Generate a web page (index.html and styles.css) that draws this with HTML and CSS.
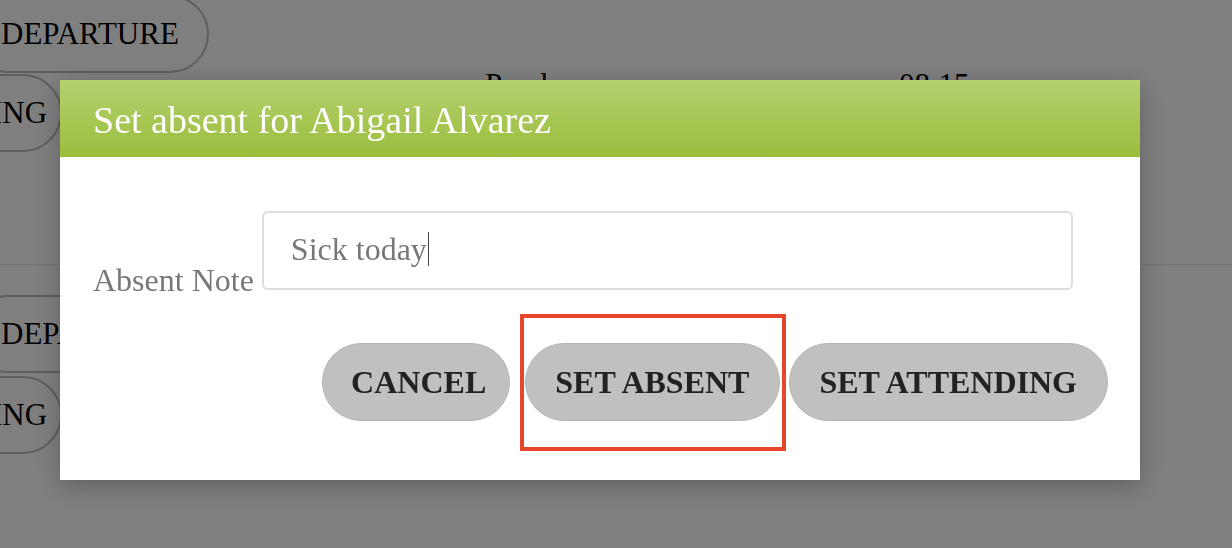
FILE: index.html
```html
<!DOCTYPE html>
<html lang="en">
<head>
<meta charset="utf-8">
<title>Set absent</title>
<link rel="stylesheet" href="styles.css">
</head>
<body>
<main class="page">
  <section class="row row-first">
    <div class="actions">
      <button class="pill pill-wide">DEPARTURE</button>
      <button class="pill pill-narrow">SETTING</button>
    </div>
    <div class="name">Pearl</div>
    <div class="time">08:15</div>
  </section>
  <section class="row">
    <div class="actions">
      <button class="pill pill-wide">DEPARTURE</button>
      <button class="pill pill-narrow pill-gap">SETTING</button>
    </div>
    <div class="name">Paul</div>
    <div class="time">08:30</div>
  </section>
</main>

<div class="overlay">
  <div class="modal" role="dialog" aria-labelledby="modal-title">
    <header class="modal-header">
      <h2 id="modal-title" class="modal-title">Set absent for Abigail Alvarez</h2>
    </header>
    <div class="modal-body">
      <div class="field">
        <label class="field-label">Absent Note</label>
        <div class="field-input">Sick today<span class="caret"></span></div>
      </div>
      <div class="buttons">
        <button class="btn btn-cancel">CANCEL</button>
        <button class="btn">SET ABSENT</button>
        <button class="btn">SET ATTENDING</button>
      </div>
    </div>
    <div class="highlight"></div>
  </div>
</div>
</body>
</html>
```

FILE: styles.css
```css
html, body {
  margin: 0;
  padding: 0;
  background: #ffffff;
  overflow: hidden;
}

body {
  font-family: "Liberation Serif", "Times New Roman", serif;
  width: 1232px;
  height: 548px;
}

.page {
  margin-top: -35px;
}

.row {
  display: flex;
  align-items: flex-start;
  padding-top: 30px;
  border-bottom: 1px solid #e6e6e6;
  height: 269px;
}

.row-first {
  height: 269px;
}

.actions {
  display: flex;
  flex-direction: column;
  align-items: flex-start;
  width: 516px;
  margin-left: -31px;
  flex: none;
}

.pill {
  font-family: "Liberation Serif", "Times New Roman", serif;
  font-size: 31px;
  color: #000;
  background: transparent;
  border: 2px solid #bcbcbc;
  border-radius: 40px;
  height: 78px;
  padding: 0 28px 0 30px;
  margin-bottom: 1px;
}

.pill-narrow {
  margin-left: -83px;
  padding-right: 13px;
}

.pill-gap {
  margin-top: 2px;
}

.name, .time {
  font-size: 31px;
  line-height: 31px;
  color: #000;
  margin-top: 74px;
}

.name {
  width: 414px;
  flex: none;
}

.overlay {
  position: fixed;
  inset: 0;
  background: rgba(0, 0, 0, 0.5);
}

.modal {
  position: absolute;
  left: 60px;
  top: 80px;
  width: 1080px;
  height: 400px;
  background: #ffffff;
  box-shadow: 0 6px 24px rgba(0, 0, 0, 0.25);
}

.modal-header {
  height: 77px;
  background: linear-gradient(to bottom, #b4d16f 0%, #9bbd3c 100%);
  padding: 0 33px;
  display: flex;
  align-items: center;
}

.modal-title {
  margin: 0;
  font-weight: normal;
  font-size: 38px;
  color: #ffffff;
  line-height: 1;
  padding-top: 2px;
}

.modal-body {
  padding: 54px 32px 0 33px;
}

.field {
  display: flex;
  align-items: flex-end;
  gap: 8px;
}

.field-label {
  font-size: 32px;
  color: #777777;
  line-height: 1;
  margin-bottom: -6px;
}

.field-input {
  width: 811px;
  height: 79px;
  box-sizing: border-box;
  border: 2px solid #dddddd;
  border-radius: 6px;
  padding: 0 27px;
  font-size: 32px;
  color: #777777;
  display: flex;
  align-items: center;
  padding-bottom: 3px;
}

.caret {
  display: inline-block;
  width: 1.5px;
  height: 34px;
  background: #444444;
  margin-left: 1px;
}

.buttons {
  display: flex;
  justify-content: flex-end;
  gap: 9px;
  margin-top: 53px;
}

.btn {
  font-family: "Liberation Serif", "Times New Roman", serif;
  font-weight: bold;
  font-size: 32px;
  color: #222222;
  background: #c0c0c0;
  border: 1px solid #b6b6b6;
  border-radius: 40px;
  height: 78px;
  padding: 0 30px 0 29px;
}

.btn-cancel {
  padding: 0 23px 0 28px;
  margin-right: 6px;
}

.highlight {
  position: absolute;
  left: 460px;
  top: 234px;
  width: 258px;
  height: 129px;
  border: 4px solid #e8462a;
  pointer-events: none;
}
```
